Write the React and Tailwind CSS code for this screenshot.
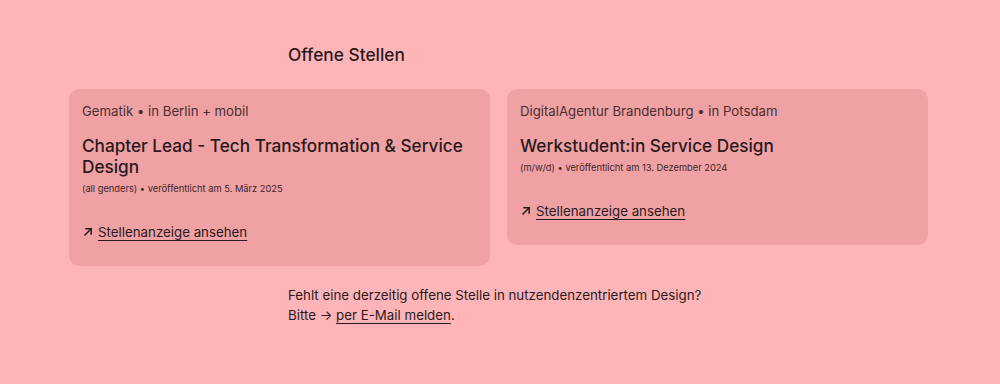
import React from "react";

function Arrow() {
  return (
    <svg width="10" height="10" viewBox="0 0 10 10" className="shrink-0" fill="none" stroke="currentColor" strokeWidth="1.5" strokeLinecap="square">
      <path d="M2 8 L8.2 1.8" />
      <path d="M3 1.8 H8.2 V7" />
    </svg>
  );
}

function Card({ meta, title, sub }) {
  return (
    <div className="flex flex-col rounded-[10px] bg-[#f0a1a4] px-[13px] pt-3 pb-6">
      <div className="text-[13.2px] leading-5 text-[#4a2e31]">{meta}</div>
      <div className="mt-[14px] text-[17.2px] leading-[21px] font-medium text-[#2a1a1d]">{title}</div>
      <div className="mt-[5px] text-[9.3px] leading-[14px] text-[#3d2629]">{sub}</div>
      <div className="mt-[26px] flex items-center gap-[5px] text-[13.3px] leading-5 text-[#2a1a1d]">
        <span className="pl-[1px]"><Arrow /></span>
        <span className="underline decoration-1 underline-offset-[3px]">Stellenanzeige ansehen</span>
      </div>
    </div>
  );
}

export default function App() {
  return (
    <div className="min-h-[384px] w-full bg-[#ffb5b8] pt-[41px] pb-[40px] text-[#2a1a1d]" style={{ fontFamily: "Inter, 'Noto Sans', sans-serif" }}>
      <div className="mx-auto w-[424px] text-[17.3px] leading-7 font-medium">Offene Stellen</div>
      <div className="ml-[69px] mt-[20px] grid w-[859px] grid-cols-2 items-start gap-[17px]">
        <Card
          meta="Gematik • in Berlin + mobil"
          title="Chapter Lead - Tech Transformation & Service Design"
          sub="(all genders) • veröffentlicht am 5. März 2025"
        />
        <Card
          meta="DigitalAgentur Brandenburg • in Potsdam"
          title="Werkstudent:in Service Design"
          sub="(m/w/d) • veröffentlicht am 13. Dezember 2024"
        />
      </div>
      <div className="mx-auto mt-[19px] w-[424px] text-[13.3px] leading-5 text-[#2a1a1d]">
        <div className="whitespace-nowrap">Fehlt eine derzeitig offene Stelle in nutzendenzentriertem Design?</div>
        <div>
          Bitte → <span className="underline decoration-1 underline-offset-[3px]">per E-Mail melden</span>.
        </div>
      </div>
    </div>
  );
}
